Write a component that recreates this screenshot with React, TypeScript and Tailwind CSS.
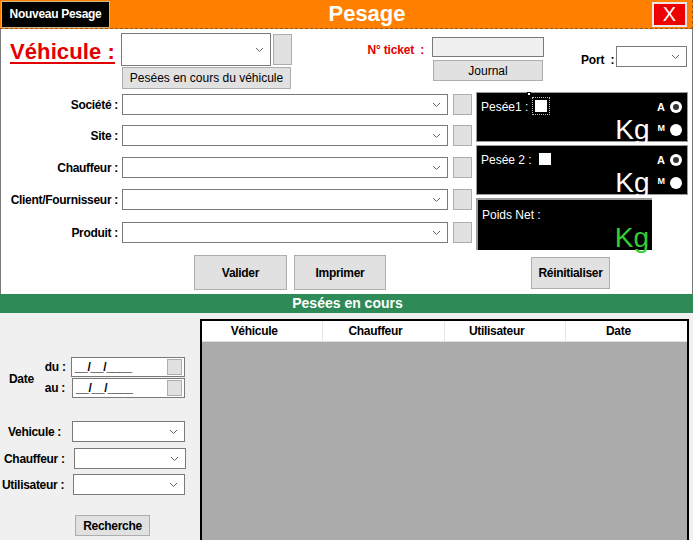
const font = { fontFamily: '"Liberation Sans", Arial, sans-serif' };

function Chevron() {
  return (
    <svg width="9" height="6" viewBox="0 0 9 6" className="shrink-0">
      <polyline points="1,1 4.5,4.5 8,1" fill="none" stroke="#606060" strokeWidth="1" />
    </svg>
  );
}

function Combo({ className }: { className: string }) {
  return (
    <div className={"flex shrink-0 items-center justify-end bg-white border border-[#7a7a7a] pr-[6px] " + className}>
      <Chevron />
    </div>
  );
}

function Square({ className }: { className: string }) {
  return <div className={"shrink-0 bg-[#e1e1e1] border border-[#adadad] " + className} />;
}

function Btn({ children, className }: { children: React.ReactNode; className: string }) {
  return (
    <div className={"flex shrink-0 items-center justify-center bg-[#e1e1e1] border border-[#adadad] text-black " + className}>
      {children}
    </div>
  );
}

function FieldRow({ label, mt }: { label: string; mt: string }) {
  return (
    <div className={"flex items-center h-[21px] " + mt}>
      <div className="w-[121px] pr-[4px] text-right text-[12px] font-bold tracking-[-0.3px]">{label}</div>
      <Combo className="w-[326px] h-[21px]" />
      <Square className="ml-[5px] w-[19px] h-[21px]" />
    </div>
  );
}

function Radio({ checked }: { checked: boolean }) {
  return (
    <div className="w-[12px] h-[12px] rounded-full bg-white flex items-center justify-center">
      {checked && <div className="w-[6px] h-[6px] rounded-full bg-[#333]" />}
    </div>
  );
}

function WeighPanel({ label, focus }: { label: string; focus: boolean }) {
  return (
    <div className="w-[212px] h-[50px] bg-black border border-[#9a9a9a] flex relative">
      <div className="flex items-start pl-[4px] pt-[4px] text-white text-[12px]">
        <span className="mt-[1px]">{label}</span>
        <div className={"ml-[4px] p-[2px] " + (focus ? "border border-dotted border-[#bbb]" : "border border-transparent")}>
          <div className="w-[12px] h-[12px] bg-white" />
        </div>
        {focus && <div className="absolute left-[50px] top-[-1px] w-[4px] h-[4px] bg-white border border-black" />}
      </div>
      <div className="ml-auto flex flex-col justify-between items-end">
        <div className="flex items-center gap-[5px] pr-[5px] pt-[6px] text-white font-bold text-[11px]">
          <span>A</span>
          <Radio checked />
        </div>
        <div className="flex items-end pr-[5px] pb-[2px]">
          <span className="text-white text-[28px] leading-[28px] mr-[8px]">Kg</span>
          <span className="text-white font-bold text-[9px] mb-[8px] mr-[5px]">M</span>
          <div className="mb-[8px]"><Radio checked={false} /></div>
        </div>
      </div>
    </div>
  );
}

function DateBox({ className }: { className: string }) {
  return (
    <div className={"flex items-center bg-white border border-[#7a7a7a] h-[20px] pl-[3px] pr-[2px] text-[12px] " + className}>
      <span>__/__/____</span>
      <Square className="ml-auto w-[15px] h-[16px]" />
    </div>
  );
}

export default function App() {
  return (
    <div className="w-[693px] h-[540px] overflow-hidden bg-[#f0f0f0] text-black" style={font}>
      {/* top bar */}
      <div className="h-[29px] bg-[#ff8000] border-b border-r border-dashed border-[#8a5a2a] flex items-center relative">
        <div className="ml-[1px] h-[27px] w-[109px] bg-black border border-[#c9b78e] flex items-center justify-center text-white text-[12px] font-bold tracking-[-0.3px]">
          Nouveau Pesage
        </div>
        <div className="flex-1 text-center text-white font-bold text-[22px] leading-none pr-[28px]">Pesage</div>
        <div className="mr-[5px] w-[35px] h-[25px] border-2 border-[#e8e8e8] bg-[#ee0000] flex items-center justify-center text-white text-[20px] leading-none">
          X
        </div>
      </div>

      {/* main form */}
      <div className="h-[265px] bg-white border-x border-[#7a7a7a] relative">
        {/* top row */}
        <div className="flex h-[63px]">
          <div className="ml-[9px] mt-[6px] w-[108px] shrink-0 text-[22px] font-bold text-[#e30000] underline decoration-2 underline-offset-[3px] tracking-[0.1px] whitespace-nowrap">
            Véhicule :
          </div>
          <div className="ml-[3px] mt-[4px] flex shrink-0 flex-col">
            <div className="flex">
              <Combo className="w-[150px] h-[33px]" />
              <Square className="ml-[2px] mt-[1px] w-[19px] h-[31px]" />
            </div>
            <Btn className="mt-[1px] ml-[1px] w-[169px] h-[22px] text-[12px]">Pesées en cours du véhicule</Btn>
          </div>
          <div className="ml-[64px] mt-[12px] w-[68px] shrink-0 whitespace-nowrap text-right text-[12px] font-bold text-[#e30000] tracking-[-0.2px]">N° ticket&nbsp; :</div>
          <div className="ml-[8px] mt-[8px] flex shrink-0 flex-col">
            <div className="w-[112px] h-[20px] bg-[#f0f0f0] border border-[#7a7a7a]" />
            <Btn className="mt-[3px] ml-[1px] w-[110px] h-[21px] text-[12px]">Journal</Btn>
          </div>
          <div className="ml-[37px] mt-[22px] w-[30px] shrink-0 whitespace-nowrap text-[12px] font-bold tracking-[-0.2px]">Port&nbsp; :</div>
          <Combo className="ml-[5px] mt-[17px] w-[71px] h-[21px]" />
        </div>

        {/* middle */}
        <div className="flex">
          <div className="flex flex-col pt-[2px]">
            <FieldRow label="Société :" mt="mt-[0px]" />
            <FieldRow label="Site :" mt="mt-[10px]" />
            <FieldRow label="Chauffeur :" mt="mt-[11px]" />
            <FieldRow label="Client/Fournisseur :" mt="mt-[11px]" />
            <FieldRow label="Produit :" mt="mt-[12px]" />
          </div>
          <div className="ml-[4px] flex flex-col">
            <WeighPanel label="Pesée1 :" focus />
            <div className="mt-[3px]"><WeighPanel label="Pesée 2 :" focus={false} /></div>
            <div className="mt-[3px] w-[176px] h-[52px] bg-black border-t-2 border-l-2 border-[#9a9a9a] flex flex-col">
              <div className="pl-[4px] pt-[6px] text-white text-[12px]">Poids Net :</div>
              <div className="mt-auto self-end pr-[3px] text-[#33cc33] text-[28px] leading-[28px]">Kg</div>
            </div>
          </div>
        </div>

        {/* buttons */}
        <div className="flex items-start mt-[5px]">
          <Btn className="ml-[193px] w-[93px] h-[35px] text-[12px] font-bold tracking-[-0.3px]">Valider</Btn>
          <Btn className="ml-[7px] w-[92px] h-[35px] text-[12px] font-bold tracking-[-0.3px]">Imprimer</Btn>
          <Btn className="ml-[145px] mt-[2px] w-[79px] h-[32px] text-[12px] font-bold tracking-[-0.3px]">Réinitialiser</Btn>
        </div>
      </div>

      {/* green bar */}
      <div className="h-[19px] bg-[#2e8b57] flex items-center justify-center text-white text-[14px] font-bold pl-[2px]">
        Pesées en cours
      </div>

      {/* bottom */}
      <div className="flex h-[227px]">
        <div className="w-[200px] flex flex-col text-[12px] font-bold tracking-[-0.3px]">
          <div className="flex mt-[44px]">
            <div className="ml-[9px] mt-[13px]">Date</div>
            <div className="ml-[11px] flex flex-col">
              <div className="flex items-center">
                <span className="w-[26px]">du :</span>
                <DateBox className="w-[114px]" />
              </div>
              <div className="flex items-center mt-[1px]">
                <span className="w-[27px]">au :</span>
                <DateBox className="w-[113px]" />
              </div>
            </div>
          </div>
          <div className="flex items-center mt-[23px] h-[21px]">
            <span className="ml-[8px] w-[64px]">Vehicule :</span>
            <Combo className="w-[113px] h-[21px]" />
          </div>
          <div className="flex items-center mt-[6px] h-[21px]">
            <span className="ml-[4px] w-[70px]">Chauffeur :</span>
            <Combo className="w-[112px] h-[21px]" />
          </div>
          <div className="flex items-center mt-[5px] h-[21px]">
            <span className="ml-[2px] w-[71px]">Utilisateur :</span>
            <Combo className="w-[112px] h-[21px]" />
          </div>
          <Btn className="ml-[75px] mt-[20px] w-[75px] h-[21px] font-bold">Recherche</Btn>
        </div>
        <div className="mt-[6px] w-[489px] h-[240px] border-2 border-black bg-[#ababab] flex flex-col">
          <div className="h-[21px] bg-white grid grid-cols-4 border-b border-[#e0e0e0] text-[12px] font-bold tracking-[-0.3px]">
            <div className="flex items-center justify-center border-r border-[#e5e5e5] pr-[16px]">Véhicule</div>
            <div className="flex items-center justify-center border-r border-[#e5e5e5] pr-[16px]">Chauffeur</div>
            <div className="flex items-center justify-center border-r border-[#e5e5e5] pr-[16px]">Utilisateur</div>
            <div className="flex items-center justify-center pr-[16px]">Date</div>
          </div>
        </div>
      </div>
    </div>
  );
}
